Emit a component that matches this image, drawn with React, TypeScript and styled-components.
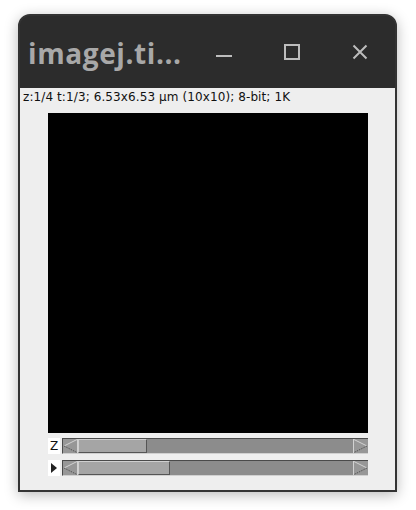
import React from "react";
import styled, { createGlobalStyle } from "styled-components";

const Global = createGlobalStyle`
  html, body { margin: 0; padding: 0; background: #ffffff; }
  body { width: 416px; height: 510px; overflow: hidden; }
`;

const Page = styled.div`
  padding: 14px 19px 0 18px;
`;

const Window = styled.div`
  width: 379px;
  box-sizing: border-box;
  border: 2px solid #333333;
  border-radius: 12px 12px 0 0;
  background: #2c2c2c;
  box-shadow: 0 3px 14px rgba(0, 0, 0, 0.28);
  overflow: hidden;
`;

const TitleBar = styled.div`
  height: 72px;
  display: flex;
  align-items: center;
  background: #2c2c2c;
  padding-left: 8px;
`;

const Title = styled.div`
  font-family: "Open Sans", "DejaVu Sans", sans-serif;
  font-weight: 700;
  font-size: 28px;
  color: #a8a8a8;
  width: 176px;
  letter-spacing: 0.6px;
  margin-top: 2px;
`;

const Controls = styled.div`
  display: flex;
  align-items: center;
  gap: 52px;
  margin-left: 12px;
`;

const Ctrl = styled.svg`
  width: 16px;
  height: 16px;
  display: block;
`;

const Content = styled.div`
  background: #eeeeee;
  display: flex;
  flex-direction: column;
  padding-bottom: 14px;
`;

const Info = styled.div`
  font-family: "DejaVu Sans", sans-serif;
  font-size: 12px;
  color: #111111;
  height: 25px;
  line-height: 18px;
  padding-left: 3px;
  white-space: nowrap;
  letter-spacing: 0.1px;
`;

const ImageArea = styled.div`
  width: 320px;
  height: 320px;
  background: #000000;
  margin-left: 28px;
`;

const SliderRow = styled.div<{ $top: number }>`
  display: flex;
  gap: 2px;
  margin-left: 28px;
  margin-top: ${(p) => p.$top}px;
  height: 16px;
`;

const Label = styled.div`
  width: 12px;
  height: 16px;
  background: #ffffff;
  display: flex;
  align-items: center;
  justify-content: center;
  font-family: "DejaVu Sans", sans-serif;
  font-size: 12px;
  color: #111111;
`;

const Bar = styled.div`
  width: 306px;
  height: 16px;
  box-sizing: border-box;
  border-top: 1px solid #4a4a4a;
  border-left: 1px solid #4a4a4a;
  border-bottom: 1px solid #d0d0d0;
  background: #8c8c8c;
  display: flex;
`;

const ArrowBtn = styled.svg`
  width: 15px;
  height: 14px;
  display: block;
  flex: none;
  background: #979797;
`;

const Track = styled.div`
  flex: 1;
  display: flex;
`;

const Thumb = styled.div`
  height: 14px;
  box-sizing: border-box;
  background: #a5a5a5;
  border-top: 1px solid #cfcfcf;
  border-left: 1px solid #cfcfcf;
  border-right: 1px solid #555555;
  border-bottom: 1px solid #555555;
`;

const LeftArrow = () => (
  <ArrowBtn viewBox="0 0 15 14">
    <line x1="14" y1="0.5" x2="1" y2="7" stroke="#d2d2d2" strokeWidth="1" />
    <line x1="1" y1="7" x2="14" y2="13.5" stroke="#555555" strokeWidth="1" strokeDasharray="1.5 1" />
    <line x1="14.5" y1="0" x2="14.5" y2="14" stroke="#d2d2d2" strokeWidth="1" />
  </ArrowBtn>
);

const RightArrow = () => (
  <ArrowBtn viewBox="0 0 15 14">
    <line x1="0.5" y1="0" x2="0.5" y2="14" stroke="#d2d2d2" strokeWidth="1" />
    <line x1="1" y1="0.5" x2="14" y2="7" stroke="#d2d2d2" strokeWidth="1" />
    <line x1="14" y1="7" x2="1" y2="13.5" stroke="#555555" strokeWidth="1" strokeDasharray="1.5 1" />
  </ArrowBtn>
);

const Slider = ({ frac, label, top }: { frac: number; label: React.ReactNode; top: number }) => (
  <SliderRow $top={top}>
    <Label>{label}</Label>
    <Bar>
      <LeftArrow />
      <Track>
        <Thumb style={{ width: `${frac * 100}%` }} />
      </Track>
      <RightArrow />
    </Bar>
  </SliderRow>
);

const Play = () => (
  <svg width="8" height="12" viewBox="0 0 8 12">
    <polygon points="1,1 7,6 1,11" fill="#222222" />
  </svg>
);

export default function App() {
  return (
    <>
      <Global />
      <Page>
        <Window>
          <TitleBar>
            <Title>imagej.ti...</Title>
            <Controls>
              <Ctrl viewBox="0 0 16 16">
                <line x1="0" y1="12" x2="16" y2="12" stroke="#bdbdbd" strokeWidth="2" />
              </Ctrl>
              <Ctrl viewBox="0 0 16 16">
                <rect x="1" y="1" width="14" height="14" fill="none" stroke="#bdbdbd" strokeWidth="2" />
              </Ctrl>
              <Ctrl viewBox="0 0 16 16">
                <path d="M1.5 1.5 L14.5 14.5 M14.5 1.5 L1.5 14.5" stroke="#bdbdbd" strokeWidth="2" />
              </Ctrl>
            </Controls>
          </TitleBar>
          <Content>
            <Info>z:1/4 t:1/3; 6.53x6.53 µm (10x10); 8-bit; 1K</Info>
            <ImageArea />
            <Slider frac={0.25} label="Z" top={5} />
            <Slider frac={1 / 3} label={<Play />} top={6} />
          </Content>
        </Window>
      </Page>
    </>
  );
}
